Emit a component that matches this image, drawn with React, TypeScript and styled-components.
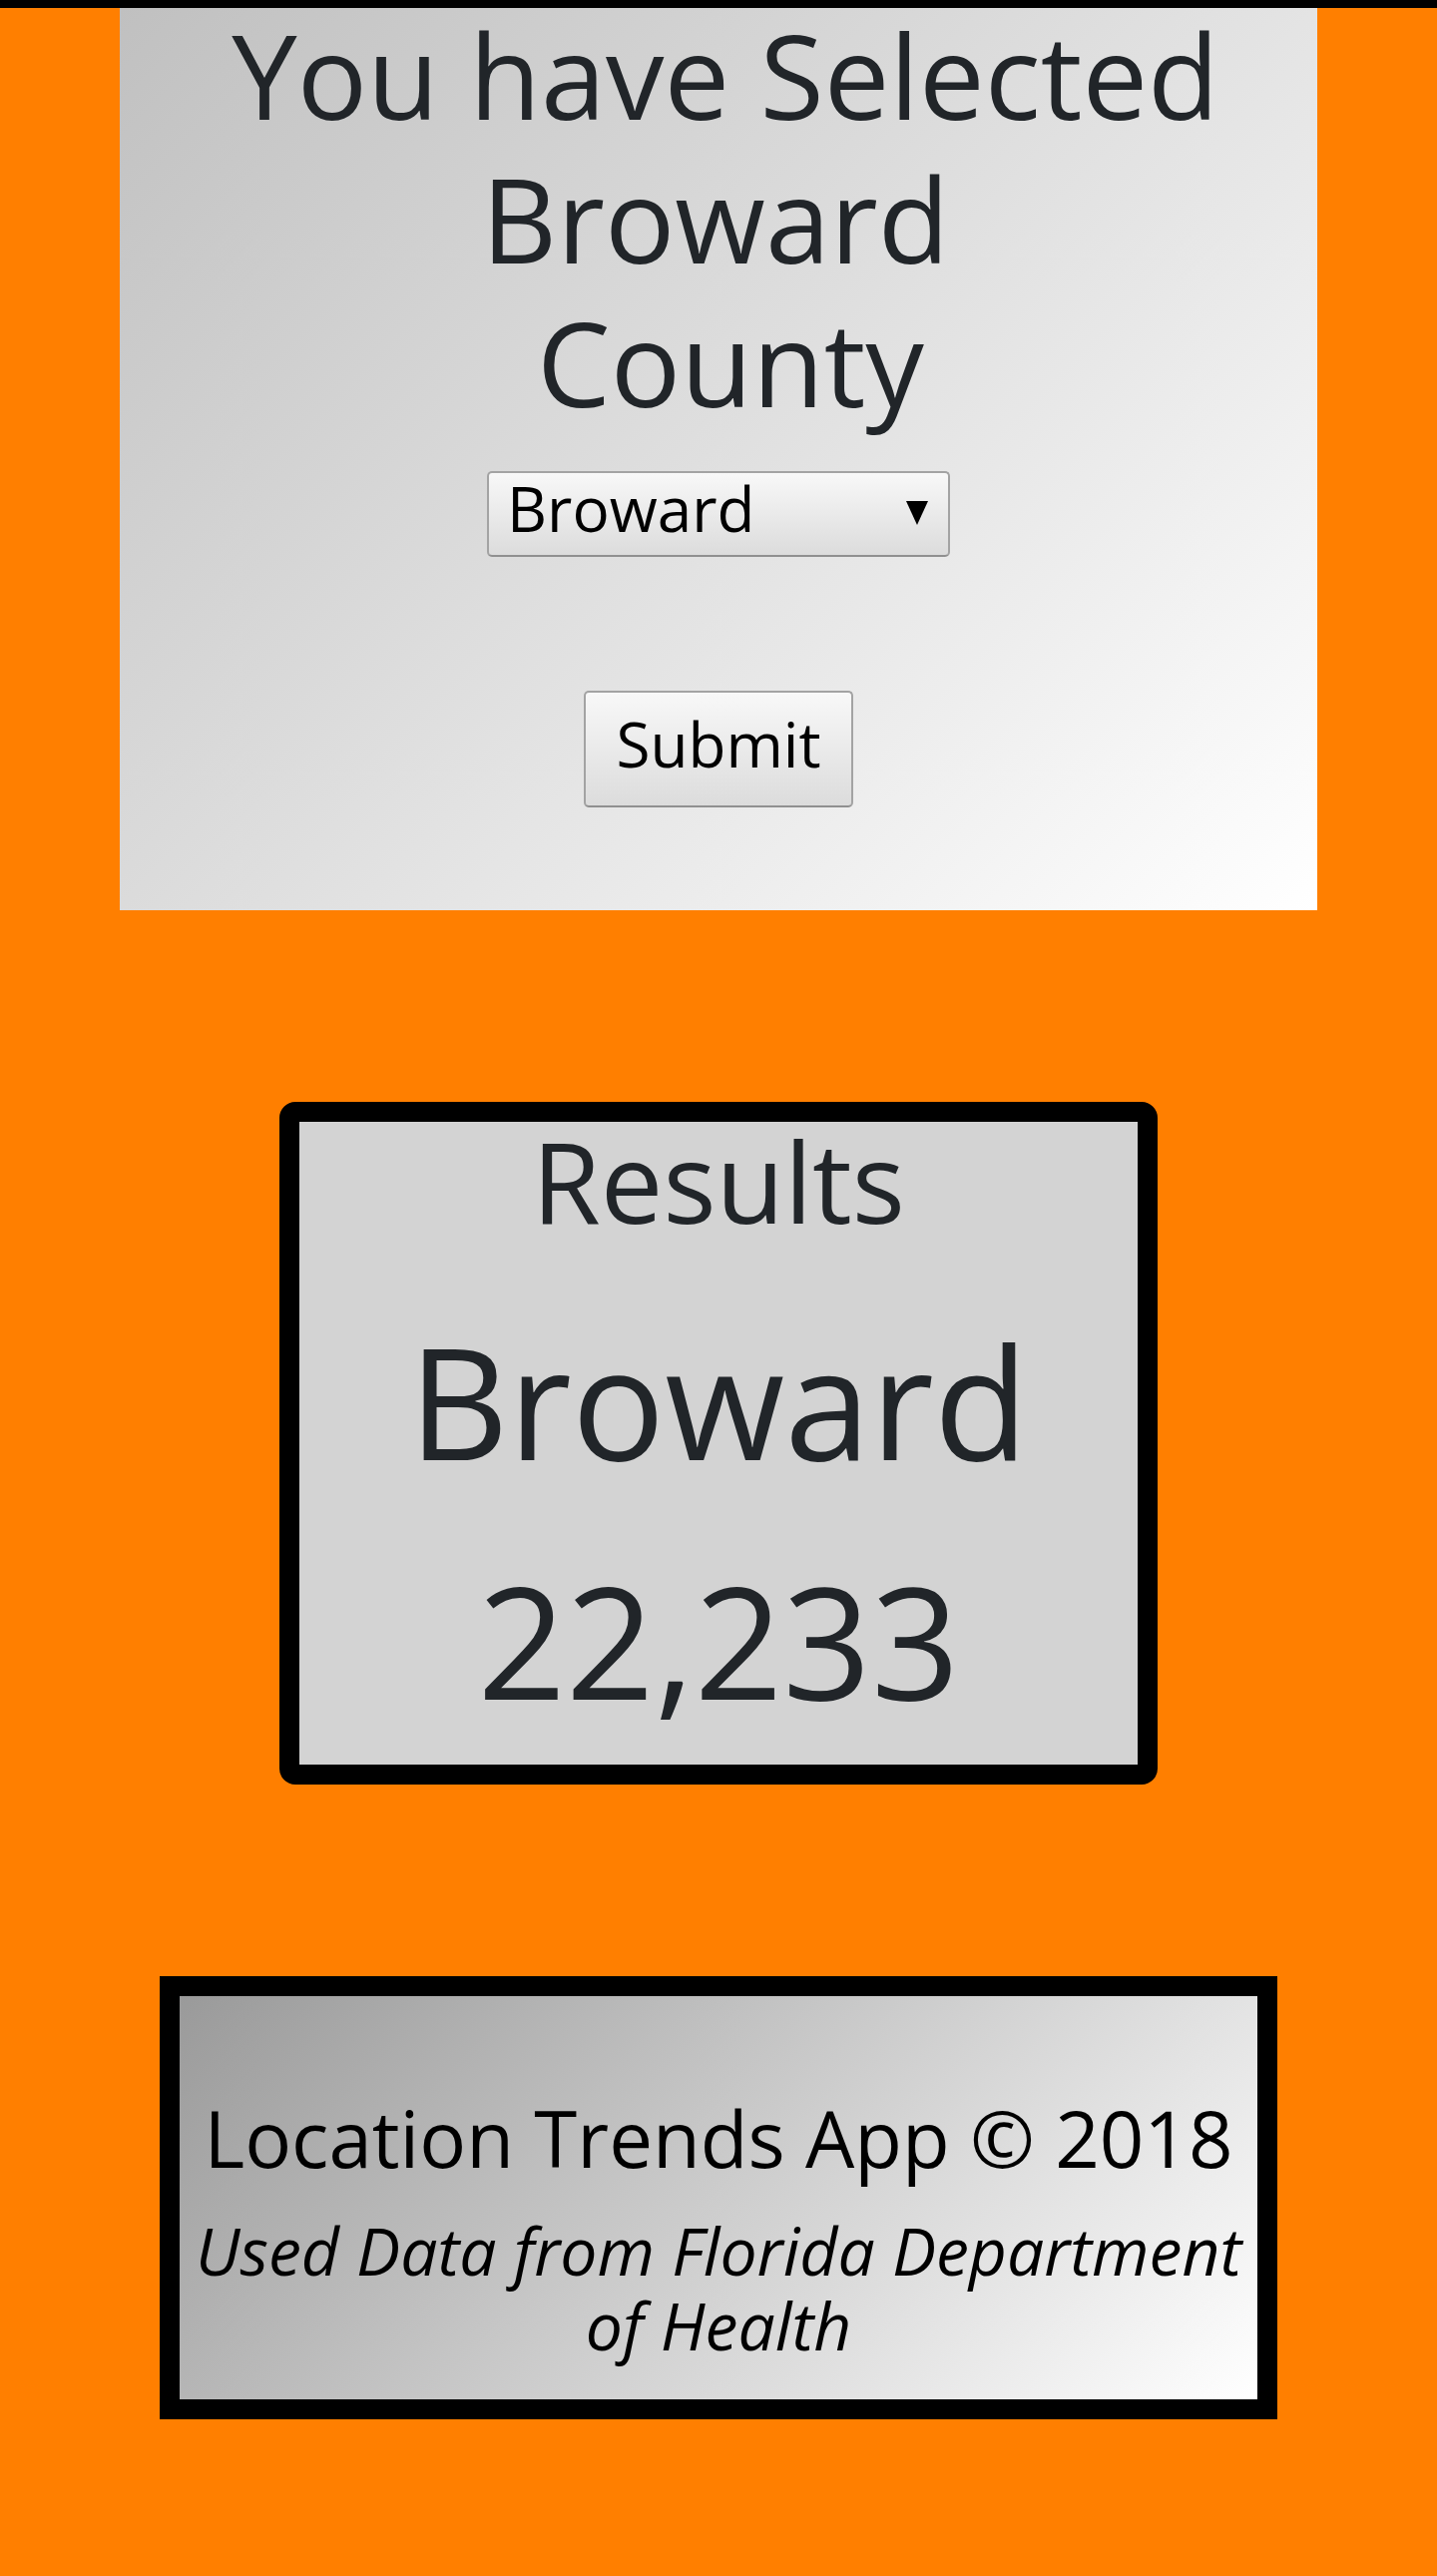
import React from "react";
import styled, { createGlobalStyle } from "styled-components";

const GlobalStyle = createGlobalStyle`
  html, body {
    margin: 0;
    padding: 0;
    background: #ff7f00;
  }
  body {
    font-family: "Open Sans", "Noto Sans", sans-serif;
  }
`;

const TopBar = styled.div`
  height: 8px;
  background: #000;
`;

const Page = styled.main`
  display: flex;
  flex-direction: column;
  align-items: center;
  padding-bottom: 157px;
`;

const SelectCard = styled.section`
  box-sizing: border-box;
  width: 1200px;
  height: 904px;
  display: flex;
  flex-direction: column;
  align-items: center;
  background: linear-gradient(135deg, #c0c0c0, #ffffff);
`;

const Heading = styled.h1`
  align-self: stretch;
  margin: -5.4px 0 0;
  font-size: 117px;
  font-weight: 400;
  line-height: 144px;
  color: #212529;
  text-align: center;
`;

const HeadingLine = styled.span<{ $shift: number }>`
  display: block;
  padding-left: ${(p) => (p.$shift > 0 ? p.$shift * 2 : 0)}px;
  padding-right: ${(p) => (p.$shift < 0 ? -p.$shift * 2 : 0)}px;
`;

const SelectWrap = styled.div`
  position: relative;
  margin-top: 37.6px;
  width: 464px;
  height: 86px;
`;

const CountySelect = styled.select`
  appearance: none;
  -webkit-appearance: none;
  box-sizing: border-box;
  width: 100%;
  height: 100%;
  margin: 0;
  padding: 0 60px 13px 18px;
  font-family: "Open Sans", "Noto Sans", sans-serif;
  font-size: 62px;
  line-height: 62px;
  color: #000;
  border: 2px solid #a3a3a3;
  border-bottom-color: #909090;
  border-radius: 5px;
  background: linear-gradient(#f8f8f8, #dcdcdc);
  outline: none;
`;

const Arrow = styled.svg`
  position: absolute;
  right: 22px;
  top: 30px;
  width: 22px;
  height: 24px;
  pointer-events: none;
`;

const SubmitButton = styled.button`
  margin-top: 134px;
  box-sizing: border-box;
  width: 270px;
  height: 117px;
  padding: 0 0 12px;
  font-family: "Open Sans", "Noto Sans", sans-serif;
  font-size: 62px;
  line-height: 62px;
  color: #000;
  border: 2px solid #a3a3a3;
  border-bottom-color: #909090;
  border-radius: 5px;
  background: linear-gradient(#f8f8f8, #dcdcdc);
`;

const ResultsCard = styled.section`
  margin-top: 192px;
  box-sizing: border-box;
  width: 880px;
  height: 684px;
  border: 20px solid #000;
  border-radius: 16px;
  background: #d3d3d3;
  display: flex;
  flex-direction: column;
  align-items: center;
  color: #212529;
`;

const ResultsTitle = styled.h2`
  margin: -3.75px 0 0;
  font-size: 111.5px;
  line-height: 127px;
  font-weight: 400;
`;

const ResultValue = styled.p<{ $gap: number }>`
  margin: ${(p) => p.$gap}px 0 0;
  font-size: 155px;
  line-height: 180px;
`;

const Footer = styled.footer`
  margin-top: 192px;
  box-sizing: border-box;
  width: 1120px;
  height: 444px;
  border: 20px solid #000;
  padding-top: 95.7px;
  background: linear-gradient(135deg, #9a9a9a, #ffffff);
  display: flex;
  flex-direction: column;
  align-items: center;
  color: #000;
  text-align: center;
`;

const FooterTitle = styled.p`
  margin: 0;
  font-size: 78px;
  line-height: 92px;
`;

const FooterNote = styled.p`
  margin: 29.2px 0 0;
  font-size: 66px;
  line-height: 75px;
  font-style: italic;
`;

export default function App() {
  return (
    <>
      <GlobalStyle />
      <TopBar />
      <Page>
        <SelectCard>
          <Heading>
            <HeadingLine $shift={7}>You have Selected</HeadingLine>
            <HeadingLine $shift={-3}>Broward</HeadingLine>
            <HeadingLine $shift={12}>County</HeadingLine>
          </Heading>
          <SelectWrap>
            <CountySelect defaultValue="Broward">
              <option value="Broward">Broward</option>
              <option value="Miami-Dade">Miami-Dade</option>
              <option value="Palm Beach">Palm Beach</option>
            </CountySelect>
            <Arrow viewBox="0 0 22 24" aria-hidden="true">
              <polygon points="0,0 22,0 11,24" fill="#000" />
            </Arrow>
          </SelectWrap>
          <SubmitButton type="button">Submit</SubmitButton>
        </SelectCard>

        <ResultsCard>
          <ResultsTitle>Results</ResultsTitle>
          <ResultValue $gap={65.6}>Broward</ResultValue>
          <ResultValue $gap={60}>22,233</ResultValue>
        </ResultsCard>

        <Footer>
          <FooterTitle>Location Trends App © 2018</FooterTitle>
          <FooterNote>
            Used Data from Florida Department
            <br />
            of Health
          </FooterNote>
        </Footer>
      </Page>
    </>
  );
}
